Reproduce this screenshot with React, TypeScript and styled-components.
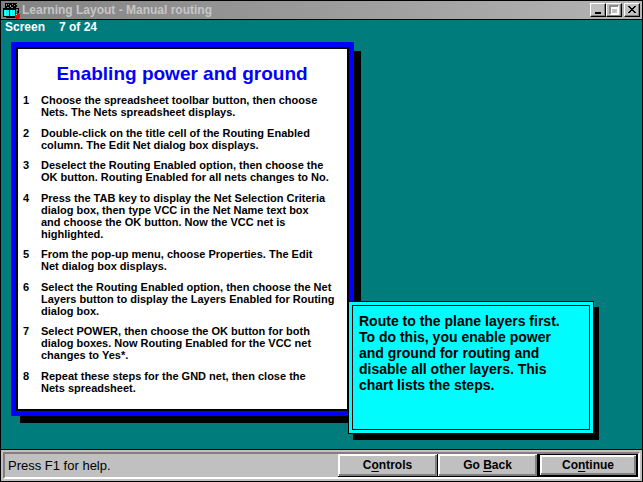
import React from "react";
import styled, { createGlobalStyle } from "styled-components";

const GlobalStyle = createGlobalStyle`
  * { box-sizing: border-box; }
  body {
    margin: 0;
    font-family: "Liberation Sans", Arial, sans-serif;
    color: #000;
  }
`;

const Window = styled.div`
  display: flex;
  flex-direction: column;
  height: 100vh;
  border: 1px solid #000;
  background: #007c7c;
  overflow: hidden;
`;

const TitleBar = styled.header`
  display: flex;
  align-items: center;
  gap: 2px;
  height: 19px;
  flex: none;
  padding: 0 2px;
  border-bottom: 1px solid #000;
  background: linear-gradient(90deg, #828282, #b4b4b4);
`;

const WindowTitle = styled.h1`
  flex: 1;
  margin: 0;
  font-size: 12px;
  line-height: 16px;
  font-weight: bold;
  color: #c6c6c6;
  white-space: nowrap;
`;

const WindowButtons = styled.div`
  display: flex;
`;

const WindowButton = styled.button<{ $apart?: boolean }>`
  display: grid;
  place-items: center;
  width: 16px;
  height: 14px;
  padding: 0;
  margin-left: ${(p) => (p.$apart ? "2px" : "0")};
  border: 1px solid;
  border-color: #fff #000 #000 #fff;
  background: #c0c0c0;
  box-shadow: inset -1px -1px #808080;
`;

const Stage = styled.main`
  position: relative;
  flex: 1;
  min-height: 0;
`;

const ScreenCount = styled.p`
  display: flex;
  gap: 14px;
  margin: 0;
  padding: 0 4px;
  font-size: 12px;
  line-height: 15px;
  font-weight: bold;
  color: #fff;
`;

const Card = styled.article`
  display: flex;
  flex-direction: column;
  width: 343px;
  min-height: 374px;
  margin: 7px 0 0 10px;
  padding: 15px 6px 17px 5px;
  border: 5px solid #0000fc;
  outline: 2px solid #000;
  outline-offset: -7px;
  background: #fff;
  box-shadow: 8px 8px 0 -1px #000;
`;

const CardTitle = styled.h2`
  margin: 0 0 8px;
  font-size: 19px;
  line-height: 24px;
  text-align: center;
  color: #0000fc;
`;

const Steps = styled.ol`
  flex: 1;
  display: flex;
  flex-direction: column;
  justify-content: space-between;
  margin: 0;
  padding: 0 0 0 2px;
  list-style: none;
  font-size: 11px;
  line-height: 12px;
  font-weight: bold;
  white-space: nowrap;
`;

const Step = styled.li`
  display: grid;
  grid-template-columns: 18px 1fr;
`;

const Line = styled.span`
  display: block;
`;

const Callout = styled.aside`
  position: absolute;
  left: 347px;
  top: 281px;
  width: 246px;
  height: 133px;
  padding: 3px;
  border: 1px solid #000;
  background: #00fcfc;
  box-shadow: 5px 6px 0 #000;
`;

const CalloutText = styled.p`
  height: 100%;
  margin: 0;
  padding: 7px 6px;
  border: 1px solid #000;
  font-size: 14px;
  line-height: 16px;
  font-weight: bold;
  white-space: nowrap;
`;

const StatusBar = styled.footer`
  flex: none;
  display: flex;
  height: 32px;
  padding: 2px;
  border-top: 1px solid #000;
  background: #c0c0c0;
`;

const StatusWell = styled.div`
  flex: 1;
  display: flex;
  border: 2px solid;
  border-color: #808080 #fff #fff #808080;
`;

const Hint = styled.span`
  flex: 1;
  padding-left: 3px;
  font-size: 13px;
  line-height: 24px;
`;

const NavButton = styled.button<{ $primary?: boolean }>`
  width: 100px;
  padding: 0;
  border: 0 solid #000;
  border-width: ${(p) => (p.$primary ? "1px 2px 2px" : "0 1px 1px 0")};
  background: #c0c0c0;
  box-shadow: inset 1px 1px #fff, inset -2px -2px #808080, inset 2px 2px #fff;
  font-family: inherit;
  font-size: 12px;
  line-height: 18px;
  font-weight: bold;
  color: #000;
`;

const Key = styled.u`
  text-underline-offset: 2px;
`;

const steps = [
  ["Choose the spreadsheet toolbar button, then choose", "Nets. The Nets spreadsheet displays."],
  ["Double-click on the title cell of the Routing Enabled", "column. The Edit Net dialog box displays."],
  ["Deselect the Routing Enabled option, then choose the", "OK button. Routing Enabled for all nets changes to No."],
  [
    "Press the TAB key to display the Net Selection Criteria",
    "dialog box, then type VCC in the Net Name text box",
    "and choose the OK button. Now the VCC net is",
    "highlighted.",
  ],
  ["From the pop-up menu, choose Properties. The Edit", "Net dialog box displays."],
  [
    "Select the Routing Enabled option, then choose the Net",
    "Layers button to display the Layers Enabled for Routing",
    "dialog box.",
  ],
  [
    "Select POWER, then choose the OK button for both",
    "dialog boxes. Now Routing Enabled for the VCC net",
    "changes to Yes*.",
  ],
  ["Repeat these steps for the GND net, then close the", "Nets spreadsheet."],
];

const calloutLines = [
  "Route to the plane layers first.",
  "To do this, you enable power",
  "and ground for routing and",
  "disable all other layers. This",
  "chart lists the steps.",
];

const BookIcon = () => (
  <svg width="17" height="17" viewBox="0 0 17 17" shapeRendering="crispEdges" aria-hidden="true">
    <path d="M2 1h12v4H2zM0 6h16v1H0zM0 7h13v8H0zM3 15h10v1H3z" fill="#000" />
    <path d="M3 2h1v2H3zM5 2h1v1H5zM7 3h1v2H7zM9 2h1v1H9zM11 3h1v1h-1zM13 2h1v1h-1z" fill="#969696" />
    <path d="M2 5h2v1H2zM6 5h2v1H6zM10 5h3v1h-3z" fill="#000" />
    <path d="M1 8h5v6H1zM7 8h5v6H7z" fill="#00fcfc" />
    <path d="M2 8h1v5H2zM8 8h1v6H8z" fill="#9cffff" />
    <path d="M15 7h1v4h-1z" fill="#000" />
    <path d="M13 11h3v1h1v4h-1v1h-3v-1h-1v-4h1z" fill="#f00000" />
    <path d="M14 9h1v2h-1z" fill="#7c0000" />
    <path d="M13 12h1v1h-1z" fill="#ffc0c0" />
  </svg>
);

export default function App() {
  return (
    <Window>
      <GlobalStyle />
      <TitleBar>
        <BookIcon />
        <WindowTitle>Learning Layout - Manual routing</WindowTitle>
        <WindowButtons>
          <WindowButton aria-label="Minimize">
            <svg width="12" height="10" shapeRendering="crispEdges">
              <path d="M3 7h6v2H3z" />
            </svg>
          </WindowButton>
          <WindowButton aria-label="Maximize" disabled>
            <svg width="12" height="10" shapeRendering="crispEdges">
              <path d="M2 1h9v9H2z M4 4h6v5H4z" fill="#fff" fillRule="evenodd" />
              <path d="M1 0h9v9H1z M3 3h6v5H3z" fill="#8c8c8c" fillRule="evenodd" />
              <path d="M3 2h7v7H3z M4 3h5v5H4z" fill="#fff" fillRule="evenodd" />
            </svg>
          </WindowButton>
          <WindowButton aria-label="Close" $apart>
            <svg width="12" height="10" shapeRendering="crispEdges">
              <path d="M2 1h2v1h1v1h2v-1h1v-1h2v1h-1v1h-1v1h-1v1h1v1h1v1h1v1h-2v-1h-1v-1h-2v1h-1v1h-2v-1h1v-1h1v-1h1v-1h-1v-1h-1v-1h-1z" />
            </svg>
          </WindowButton>
        </WindowButtons>
      </TitleBar>
      <Stage>
        <ScreenCount>
          <span>Screen</span>
          <span>7 of 24</span>
        </ScreenCount>
        <Card>
          <CardTitle>Enabling power and ground</CardTitle>
          <Steps>
            {steps.map((lines, i) => (
              <Step key={i}>
                <span>{i + 1}</span>
                <div>
                  {lines.map((line) => (
                    <Line key={line}>{line}</Line>
                  ))}
                </div>
              </Step>
            ))}
          </Steps>
        </Card>
        <Callout>
          <CalloutText>
            {calloutLines.map((line) => (
              <Line key={line}>{line}</Line>
            ))}
          </CalloutText>
        </Callout>
      </Stage>
      <StatusBar>
        <StatusWell>
          <Hint>Press F1 for help.</Hint>
          <NavButton accessKey="o">
            C<Key>o</Key>ntrols
          </NavButton>
          <NavButton accessKey="b">
            Go <Key>B</Key>ack
          </NavButton>
          <NavButton accessKey="n" $primary>
            Co<Key>n</Key>tinue
          </NavButton>
        </StatusWell>
      </StatusBar>
    </Window>
  );
}
